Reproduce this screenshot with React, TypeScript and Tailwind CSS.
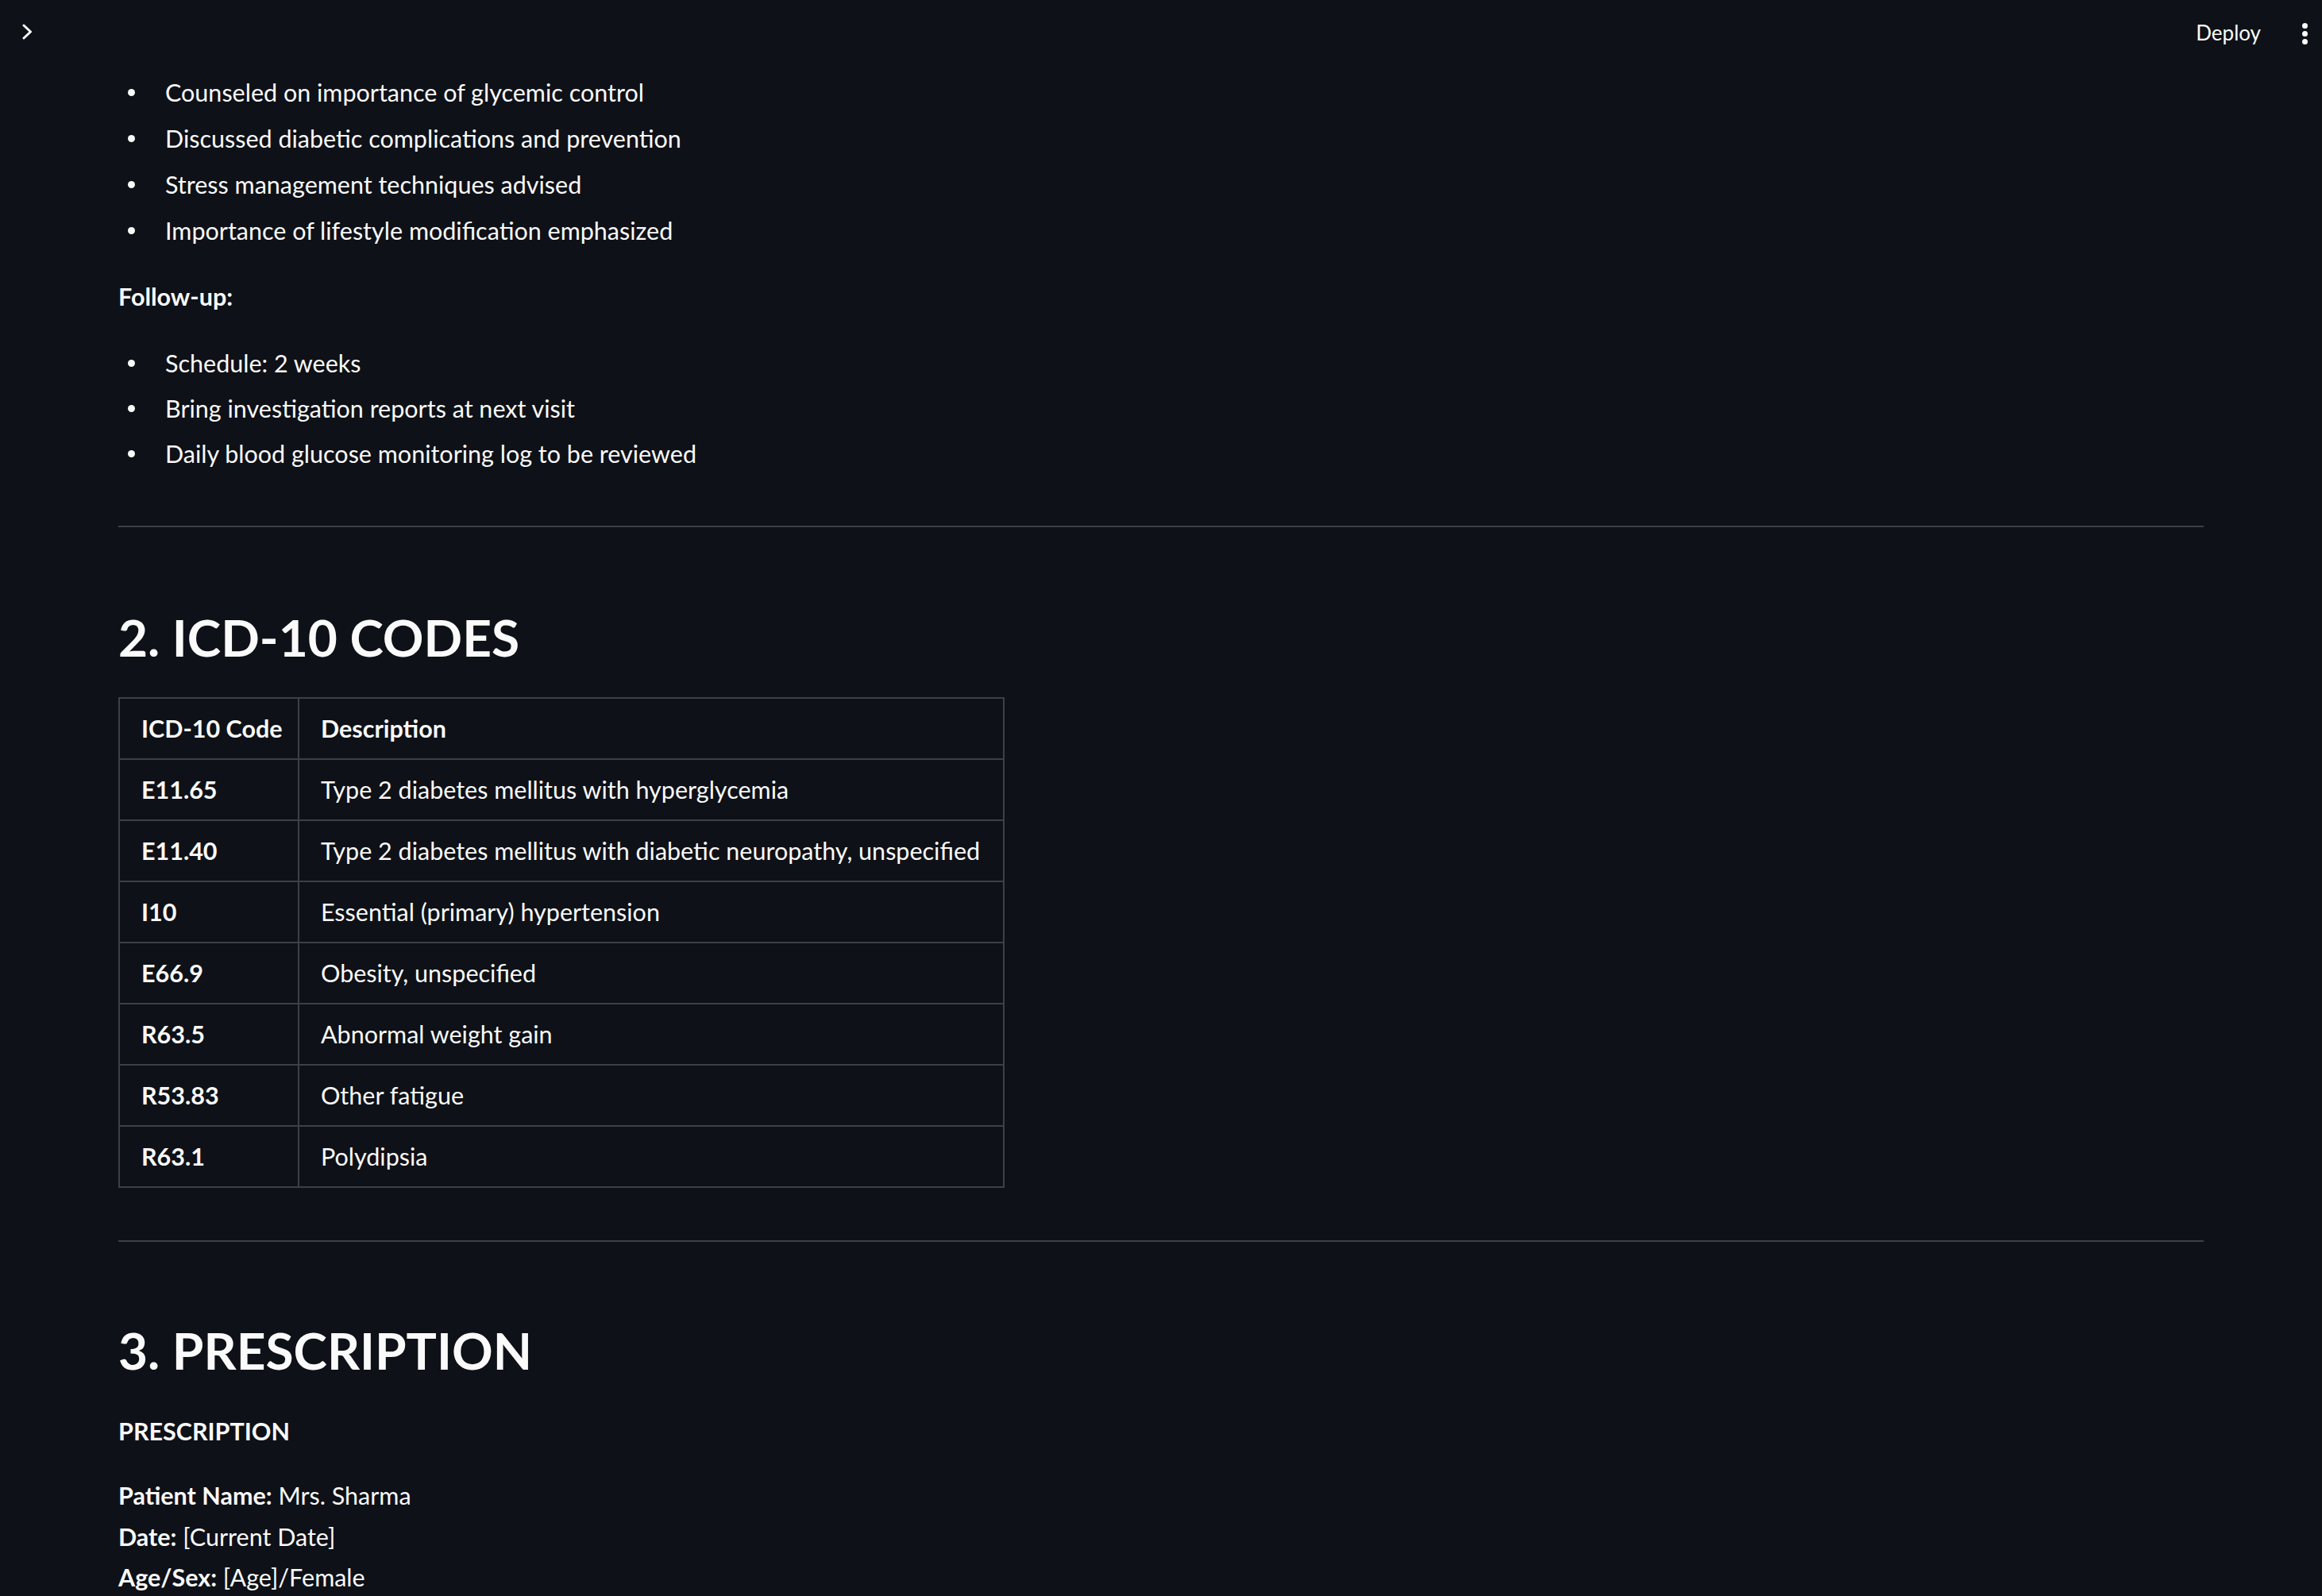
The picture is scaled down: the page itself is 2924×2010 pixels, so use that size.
import type { ReactNode } from 'react'

const counselingItems = [
  'Counseled on importance of glycemic control',
  'Discussed diabetic complications and prevention',
  'Stress management techniques advised',
  'Importance of lifestyle modification emphasized',
]

const followUpItems = [
  'Schedule: 2 weeks',
  'Bring investigation reports at next visit',
  'Daily blood glucose monitoring log to be reviewed',
]

const icdCodes = [
  { code: 'E11.65', desc: 'Type 2 diabetes mellitus with hyperglycemia' },
  { code: 'E11.40', desc: 'Type 2 diabetes mellitus with diabetic neuropathy, unspecified' },
  { code: 'I10', desc: 'Essential (primary) hypertension' },
  { code: 'E66.9', desc: 'Obesity, unspecified' },
  { code: 'R63.5', desc: 'Abnormal weight gain' },
  { code: 'R53.83', desc: 'Other fatigue' },
  { code: 'R63.1', desc: 'Polydipsia' },
]

function BulletList({ items, className }: { items: string[]; className: string }) {
  return (
    <ul className={`flex flex-col ${className}`}>
      {items.map((item) => (
        <li key={item} className="flex items-center h-[48px] leading-[48px]">
          <span className="w-[59px] flex items-center pl-[12px] shrink-0">
            <span className="w-[9px] h-[9px] rounded-full bg-[#fafafa]" />
          </span>
          <span>{item}</span>
        </li>
      ))}
    </ul>
  )
}

function Divider({ className }: { className: string }) {
  return <hr className={`border-0 h-[2px] bg-[#3d4044] ${className}`} />
}

function Heading({ children, className }: { children: ReactNode; className: string }) {
  return <h2 className={`text-[64px] leading-[80px] font-bold ${className}`}>{children}</h2>
}

export default function App() {
  return (
    <div
      className="min-h-screen w-full bg-[#0e1117] text-[#fafafa] text-[30.5px]"
      style={{ fontFamily: 'Lato, "Noto Sans", sans-serif' }}
    >
      {/* top bar */}
      <header className="h-[84px] flex items-center pl-[28px] pr-[18px]">
        <svg width="13" height="20" viewBox="0 0 13 20" className="mb-[4px]" fill="none">
          <path d="M2 2 L10.5 10 L2 18" stroke="#fafafa" strokeWidth="3" strokeLinecap="round" strokeLinejoin="round" />
        </svg>
        <div className="flex-1" />
        <span className="text-[26px] mr-[52px] mb-[2px]">Deploy</span>
        <span className="flex flex-col gap-[3px] w-[7px]">
          <span className="w-[7px] h-[7px] rounded-full bg-[#fafafa]" />
          <span className="w-[7px] h-[7px] rounded-full bg-[#fafafa]" />
          <span className="w-[7px] h-[7px] rounded-full bg-[#fafafa]" />
        </span>
      </header>

      <main className="px-[149px]">
        <BulletList items={counselingItems} className="mt-[8px] gap-[10px]" />

        <p className="mt-[35px] h-[48px] leading-[48px] font-bold">Follow-up:</p>

        <BulletList items={followUpItems} className="mt-[36px] gap-[9px]" />

        <Divider className="mt-[67px]" />

        <Heading className="mt-[99px]">2. ICD-10 CODES</Heading>

        <table className="mt-[35px] border-collapse table-fixed w-[1114px]">
          <colgroup>
            <col className="w-[226px]" />
            <col className="w-[888px]" />
          </colgroup>
          <thead>
            <tr>
              <th className="h-[77px] border-2 border-[#3d4044] pl-[27px] pr-0 text-left font-bold whitespace-nowrap">ICD-10 Code</th>
              <th className="h-[77px] border-2 border-[#3d4044] pl-[27px] pr-0 text-left font-bold whitespace-nowrap">Description</th>
            </tr>
          </thead>
          <tbody>
            {icdCodes.map((row) => (
              <tr key={row.code}>
                <td className="h-[77px] border-2 border-[#3d4044] pl-[27px] pr-0 font-bold whitespace-nowrap">{row.code}</td>
                <td className="h-[77px] border-2 border-[#3d4044] pl-[27px] pr-0 whitespace-nowrap">{row.desc}</td>
              </tr>
            ))}
          </tbody>
        </table>

        <Divider className="mt-[66px]" />

        <Heading className="mt-[97px]">3. PRESCRIPTION</Heading>

        <p className="mt-[37px] h-[48px] leading-[48px] font-bold">PRESCRIPTION</p>

        <div className="mt-[32px] leading-[51.5px]">
          <p>
            <span className="font-bold">Patient Name:</span> Mrs. Sharma
          </p>
          <p>
            <span className="font-bold">Date:</span> [Current Date]
          </p>
          <p>
            <span className="font-bold">Age/Sex:</span> [Age]/Female
          </p>
        </div>
      </main>
    </div>
  )
}
